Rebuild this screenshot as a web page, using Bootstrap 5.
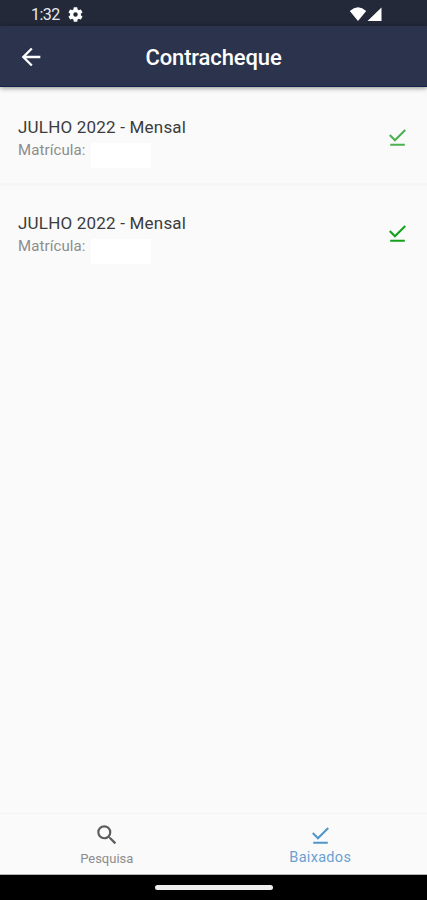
<!DOCTYPE html>
<html lang="pt-BR">
<head>
<meta charset="utf-8">
<meta name="viewport" content="width=device-width, initial-scale=1">
<title>Contracheque</title>
<link href="https://cdn.jsdelivr.net/npm/bootstrap@5.3.0/dist/css/bootstrap.min.css" rel="stylesheet">
<style>
body{font-family:Roboto,"Liberation Sans",sans-serif;background:#fafafa}
svg{display:block;fill:currentColor;flex:none}
.screen{height:900px;overflow:hidden}
.statusbar{height:26px;background:#232938;padding:4px 44px 0 31px}
.clock{font-size:16px;line-height:21px;letter-spacing:-.5px;color:#e8e9ec;width:37px}
.gear{margin-top:3px}
.appbar{height:61px;background:#2c344d;border-bottom:1px solid #13244a;box-shadow:0 1px 5px rgba(0,0,0,.45);z-index:1;padding:2px 17px 0}
.appbar-title{font-size:22px;font-weight:500;line-height:28px;padding-top:2px;letter-spacing:-.12px}
.side{width:28px}
.slip{height:95px;padding:0 17px 0 18px}
.slip-first{height:99px;padding-top:5px;border-bottom:3px solid #f6f6f6}
.slip-title{font-size:17px;line-height:22px;color:#3c3c3c;letter-spacing:.2px}
.slip-sub{font-size:15px;line-height:20px;color:#8c8c8c;letter-spacing:.1px;margin-top:2px}
.redact{width:60px;height:25px;background:#fff;margin:3px 0 -8px 5px}
.done-a{color:#4caf50}.done-b{color:#14a01c}
.tabs{height:62px;border-top:1px solid #f3f3f3;border-bottom:1px solid #b5b5b5;background:#fafafa}
.tab-off{color:#5c5c5c;padding-top:8px}
.tab-off span{font-size:13px;line-height:18px;color:#8d8d8d;padding-top:2px}
.tab-on{color:#4f97cb;padding-top:9px}
.tab-on span{font-size:14.5px;line-height:18px;color:#6ba0d0;letter-spacing:.3px;padding-top:1px}
.sysbar{height:25px;background:#000}
.pill{width:118px;height:5px;background:#eee}
</style>
</head>
<body>
<svg class="d-none" aria-hidden="true"><symbol id="done" viewBox="0 0 24 24"><path d="M20.13 5.41 18.72 4l-9.19 9.19-4.25-4.25-1.41 1.41 5.66 5.66zM5 18h14v2H5z"/></symbol></svg>
<div class="screen d-flex flex-column">
  <div class="statusbar d-flex text-white">
    <span class="clock">1:32</span>
    <svg class="gear" width="15" height="15" viewBox="2 2 20 20"><path d="M19.14 12.94c.04-.3.06-.61.06-.94s-.02-.64-.07-.94l2.03-1.58c.18-.14.23-.41.12-.61l-1.92-3.32c-.12-.22-.37-.29-.59-.22l-2.39.96c-.5-.38-1.03-.7-1.62-.94l-.36-2.54c-.04-.24-.24-.41-.48-.41h-3.84c-.24 0-.43.17-.47.41l-.36 2.54c-.59.24-1.13.57-1.62.94l-2.39-.96c-.22-.08-.47 0-.59.22L2.74 8.87c-.12.21-.08.47.12.61l2.03 1.58c-.05.3-.09.63-.09.94s.02.64.07.94l-2.03 1.58c-.18.14-.23.41-.12.61l1.92 3.32c.12.22.37.29.59.22l2.39-.96c.5.38 1.03.7 1.62.94l.36 2.54c.05.24.24.41.48.41h3.84c.24 0 .44-.17.47-.41l.36-2.54c.59-.24 1.13-.56 1.62-.94l2.39.96c.22.08.47 0 .59-.22l1.92-3.32c.12-.22.07-.47-.12-.61zM12 15a3 3 0 1 1 0-6 3 3 0 0 1 0 6z"/></svg>
    <svg width="34" height="16" viewBox="0 0 34 16" class="gear ms-auto"><path d="M.8 4Q9 -3.400 17.2 4L9 14zM32.500 .5v13.500H18.500z"/></svg>
  </div>
  <nav class="appbar d-flex align-items-center justify-content-between position-relative text-white">
    <svg width="28" height="28" viewBox="0 0 24 24"><path d="M20 11H7.830l5.590-5.590L12 4l-8 8 8 8 1.410-1.410L7.830 13H20z"/></svg>
    <div class="appbar-title">Contracheque</div>
    <div class="side"></div>
  </nav>
  <main class="flex-grow-1">
    <div class="slip slip-first d-flex align-items-center justify-content-between">
      <div><div class="slip-title">JULHO 2022 - Mensal</div><div class="slip-sub d-flex">Matrícula:<div class="redact"></div></div></div>
      <svg class="done-a" width="25" height="25"><use href="#done"/></svg>
    </div>
    <div class="slip d-flex align-items-center justify-content-between">
      <div><div class="slip-title">JULHO 2022 - Mensal</div><div class="slip-sub d-flex">Matrícula:<div class="redact"></div></div></div>
      <svg class="done-b" width="25" height="25"><use href="#done"/></svg>
    </div>
  </main>
  <div class="tabs row g-0">
    <div class="col-6 tab-off d-flex flex-column align-items-center">
      <svg width="26" height="26" viewBox="0 0 24 24"><path d="M15.500 14h-.79l-.28-.27A6.471 6.471 0 0 0 16 9.500 6.500 6.500 0 1 0 9.500 16c1.610 0 3.090-.59 4.230-1.570l.27.28v.79l5 4.990L20.490 19zm-6 0a4.500 4.500 0 1 1 0-9 4.500 4.500 0 0 1 0 9z"/></svg>
      <span>Pesquisa</span>
    </div>
    <div class="col-6 tab-on d-flex flex-column align-items-center">
      <svg width="25" height="25"><use href="#done"/></svg>
      <span>Baixados</span>
    </div>
  </div>
  <div class="sysbar d-flex align-items-center justify-content-center"><div class="pill rounded-pill"></div></div>
</div>
<script src="https://cdn.jsdelivr.net/npm/bootstrap@5.3.0/dist/js/bootstrap.bundle.min.js"></script>
</body>
</html>
